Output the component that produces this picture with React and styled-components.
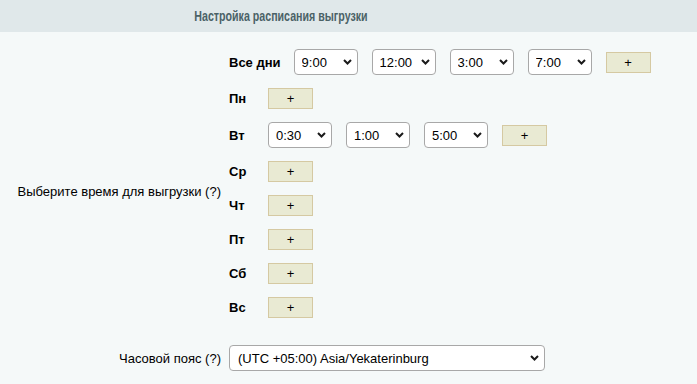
import React from "react";
import styled, { createGlobalStyle } from "styled-components";

const GlobalStyle = createGlobalStyle`
	html, body {
		margin: 0;
		padding: 0;
		background: #f5f9f9;
	}
	body {
		font-family: "Liberation Sans", Arial, sans-serif;
		font-size: 13px;
		color: #000;
	}
`;

const allDays = ["9:00", "12:00", "3:00", "7:00"];
const days = [
	{ name: "Пн", times: [] },
	{ name: "Вт", times: ["0:30", "1:00", "5:00"] },
	{ name: "Ср", times: [] },
	{ name: "Чт", times: [] },
	{ name: "Пт", times: [] },
	{ name: "Сб", times: [] },
	{ name: "Вс", times: [] },
];

const Chevron = () => (
	<ChevronIcon width="9" height="6" viewBox="0 0 9 6">
		<path d="M1 1l3.5 3.5L8 1" fill="none" stroke="#1a1a1a" strokeWidth="2" />
	</ChevronIcon>
);

const TimeSelect = ({ value, wide }) => (
	<SelectWrap $wide={wide}>
		<Select defaultValue={value} $wide={wide}>
			<option>{value}</option>
		</Select>
		<Chevron />
	</SelectWrap>
);

const DayRow = ({ name, times }) => (
	<Row>
		<DayLabel>{name}</DayLabel>
		<Times>
			{times.map((t) => (
				<TimeSelect key={t} value={t} />
			))}
			<AddButton>+</AddButton>
		</Times>
	</Row>
);

const App = () => {
	return (
		<Wrapper>
			<GlobalStyle />
			<Heading>
				<HeadingBox>
					<HeadingText>Настройка расписания выгрузки</HeadingText>
				</HeadingBox>
			</Heading>
			<Form>
				<Label $lifted>Выберите время для выгрузки (?)</Label>
				<Days>
					<DayRow name="Все дни" times={allDays} />
					{days.map((d) => (
						<DayRow key={d.name} name={d.name} times={d.times} />
					))}
				</Days>
				<Label>Часовой пояс (?)</Label>
				<Field>
					<TimeSelect value="(UTC +05:00) Asia/Yekaterinburg" wide />
				</Field>
			</Form>
		</Wrapper>
	);
};

const Wrapper = styled.div`
	display: flex;
	flex-direction: column;
	width: 697px;
`;
const Heading = styled.div`
	display: flex;
	align-items: center;
	height: 32px;
	background-color: #e0e8ea;
`;
const HeadingBox = styled.div`
	width: 561px;
	text-align: center;
`;
const HeadingText = styled.span`
	display: inline-block;
	font-size: 14px;
	font-weight: bold;
	color: #4b6267;
	transform: scaleX(0.76);
`;
const Form = styled.div`
	display: grid;
	grid-template-columns: 221px 1fr;
	column-gap: 8px;
	padding-top: 17px;
`;
const Label = styled.div`
	align-self: center;
	text-align: right;
	padding-bottom: ${(p) => (p.$lifted ? "11px" : "0")};
`;
const Days = styled.div`
	display: flex;
	flex-direction: column;
	gap: 13px;
	padding-bottom: 27px;
`;
const Row = styled.div`
	display: flex;
	align-items: center;
`;
const DayLabel = styled.div`
	min-width: 26px;
	padding-right: 13px;
	font-weight: bold;
	font-size: 13px;
`;
const Times = styled.div`
	display: flex;
	align-items: center;
	gap: 14px;
`;
const SelectWrap = styled.div`
	position: relative;
	display: flex;
	width: ${(p) => (p.$wide ? "316px" : "64px")};
`;
const Select = styled.select`
	appearance: none;
	-webkit-appearance: none;
	width: 100%;
	height: 26px;
	margin: 0;
	padding: 0 20px 0 ${(p) => (p.$wide ? "8px" : "7px")};
	border: 1px solid #a8a8a8;
	border-radius: 4px;
	background: #fff;
	font-family: "Liberation Sans", Arial, sans-serif;
	font-size: 13px;
	color: #000;
`;
const ChevronIcon = styled.svg`
	position: absolute;
	right: 6px;
	top: 10px;
	pointer-events: none;
`;
const AddButton = styled.button`
	width: 45px;
	height: 21px;
	padding: 0;
	border: 1px solid #d5c9a2;
	background-color: #e9ead3;
	font-family: "Liberation Sans", Arial, sans-serif;
	font-size: 13px;
	color: #000;
	line-height: 19px;
`;
const Field = styled.div`
	display: flex;
`;

export default App;
